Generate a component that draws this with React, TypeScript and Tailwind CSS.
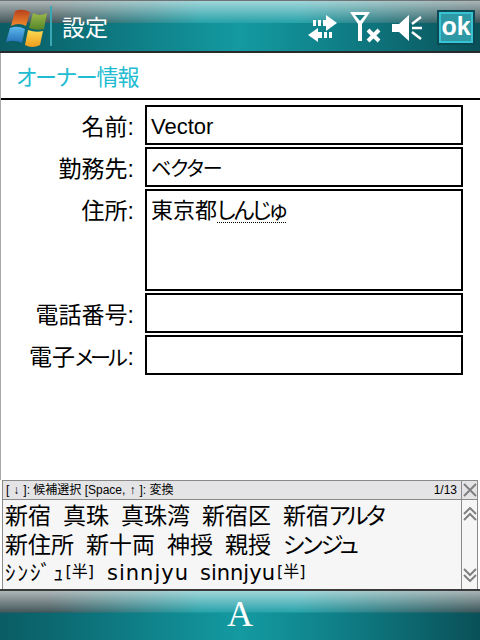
const jp = { fontFamily: '"Liberation Sans", "Noto Sans CJK JP", sans-serif', fontFeatureSettings: '"palt"' };

const barBg =
  "[background:linear-gradient(to_bottom,rgba(255,255,255,0.6),rgba(255,255,255,0.08))_0_0/100%_44%_no-repeat,linear-gradient(to_right,#34484c_0%,#34484c_10%,#149aa2_42%,#149aa2_62%,#2a4448_100%)_0_0/100%_44%_no-repeat,linear-gradient(to_right,#0b5c64_0%,#0b6a72_12%,#149aa2_50%,#0f7d85_72%,#0a5058_100%)]";

function WinLogo() {
  return (
    <svg width="42" height="38" viewBox="0 0 42 38">
      <defs>
        <linearGradient id="logoRed" x1="0" y1="0" x2="0" y2="1">
          <stop offset="0" stopColor="#b8401c" />
          <stop offset="1" stopColor="#f08a2c" />
        </linearGradient>
        <linearGradient id="logoGreen" x1="0" y1="0" x2="0" y2="1">
          <stop offset="0" stopColor="#9ab84a" />
          <stop offset="1" stopColor="#55852a" />
        </linearGradient>
        <linearGradient id="logoBlue" x1="0" y1="0" x2="0" y2="1">
          <stop offset="0" stopColor="#5cb8ec" />
          <stop offset="1" stopColor="#2470b8" />
        </linearGradient>
        <linearGradient id="logoYellow" x1="0" y1="0" x2="0" y2="1">
          <stop offset="0" stopColor="#fbdc54" />
          <stop offset="1" stopColor="#f09c1c" />
        </linearGradient>
      </defs>
      <path d="M10 2 Q17 -1 25 3 L21 17 Q14 13 6 17 Z" fill="url(#logoRed)" />
      <path d="M28 4 Q35 8 42 4 L39 20 Q31 22 24 19 Z" fill="url(#logoGreen)" />
      <path d="M5 19 Q13 16 20 20 L17 34 Q9 30 1 33 Z" fill="url(#logoBlue)" />
      <path d="M23 21 Q31 24 38 22 L35 36 Q27 40 20 36 Z" fill="url(#logoYellow)" />
    </svg>
  );
}

function SyncIcon() {
  return (
    <svg width="31" height="28" viewBox="0 0 31 28" fill="#fff">
      <path d="M6 6h3v6H6zM11 6h3v6h-3zM16 6h3V1l11 8-11 8v-5h-3z" />
      <path d="M11 28 1 21l10-7v4h4v6h-4zM17 18h3v6h-3zM22 18h3v6h-3z" />
    </svg>
  );
}

function SignalOffIcon() {
  return (
    <svg width="32" height="32" viewBox="0 0 32 32" fill="none" stroke="#fff">
      <path d="M0 0h20L12 12v17H8V12z" fill="#fff" stroke="none" />
      <path d="M5 3h10l-5 6z" fill="#1a8189" stroke="none" />
      <path d="M18 18l11 11M29 18 18 29" strokeWidth="4" />
    </svg>
  );
}

function SoundIcon() {
  return (
    <svg width="31" height="26" viewBox="0 0 31 26" fill="none" stroke="#fff">
      <path d="M0 9h7l10-9v26L7 17H0z" fill="#fff" stroke="none" />
      <path d="M20 9l9-7M20 13h10M20 17l9 7" strokeWidth="2.5" />
    </svg>
  );
}

function Row({ label, value, tall }: { label: React.ReactNode; value?: React.ReactNode; tall?: boolean }) {
  return (
    <div className="flex gap-[9px]">
      <div className="w-[135px] h-10 pr-[2px] pt-[4px] text-right text-[23px] leading-[36px] text-black">{label}:</div>
      <div className={`w-[318px] border-2 border-black px-[4px] pt-[2px] text-[22px] leading-[36px] text-black ${tall ? "h-[102px]" : "h-10"}`}>
        {value}
      </div>
    </div>
  );
}

export default function App() {
  return (
    <div className="w-[480px] h-[640px] flex flex-col bg-white overflow-hidden" style={jp}>
      <div className={`h-[53px] shrink-0 flex items-center border-t border-t-[#6f7577] border-b-2 border-b-[#262a2a] ${barBg}`}>
        <div className="w-[50px] pl-[5px] pt-[4px] flex">
          <WinLogo />
        </div>
        <div className="w-[2px] h-10 bg-[#3aa8b4]" />
        <div className="ml-[10px] pt-[4px] text-[23px] text-white flex-1">設定</div>
        <div className="flex items-center pt-[3px]">
          <SyncIcon />
          <div className="ml-[12px]"><SignalOffIcon /></div>
          <div className="ml-[10px]"><SoundIcon /></div>
          <div className="ml-[14px] mr-[5px] w-[38px] h-[35px] border-[2px] border-[#0b4a52] flex">
            <div className="flex-1 border-2 border-[#38c4d4] bg-[#2e98a4] text-white font-bold text-[25px] leading-[25px] text-center">ok</div>
          </div>
        </div>
      </div>

      <div className="flex-1 flex flex-col border-l border-l-[#a8a8a8]">
        <div className="h-[47px] shrink-0 border-b-2 border-black pl-[15px] text-[22px] leading-[50px] tracking-[-1px] text-[#22bcd2]">オーナー情報</div>
        <div className="flex flex-col gap-[2px] pt-[5px]">
          <Row label="名前" value="Vector" />
          <Row label="勤務先" value={<span className="text-[20px] tracking-[-1px]">ベクター</span>} />
          <Row
            label="住所"
            tall
            value={
              <span>
                東京都<span className="inline-block h-[24px] leading-[24px] tracking-[-2px] border-b border-dotted border-black">しんじゅ</span>
              </span>
            }
          />
          <Row label="電話番号" />
          <Row label={<>電子<span className="text-[21px] tracking-[-3px] mr-[3px]">メール</span></>} />
        </div>
      </div>

      <div className="h-[109px] shrink-0 mx-[2px] flex flex-col border-t border-t-[#8a8a8a] border-x border-x-[#8a8a8a] bg-[#f6f6f6]">
        <div className="h-[19px] shrink-0 flex border-b border-[#8a8a8a] bg-[#e4e4e6] text-[12px] leading-[18px] text-black">
          <div className="flex-1 pl-[3px] flex justify-between pr-[4px]">
            <span>[<span className="px-[4px]">↓</span>]: 候補選択 [Space,<span className="px-[4px]">↑</span>]: 変換</span>
            <span>1/13</span>
          </div>
          <div className="w-[16px] border-l border-[#8a8a8a] flex items-center justify-center">
            <svg width="14" height="14" viewBox="0 0 14 14" fill="none" stroke="#808080" strokeWidth="2">
              <path d="M1 1l12 12M13 1 1 13" />
            </svg>
          </div>
        </div>
        <div className="flex-1 flex">
          <div className="flex-1 pl-[2px] text-black">
            <div className="text-[23px] leading-[29px] mt-[2px] flex gap-[12px]">
              <span>新宿</span><span>真珠</span><span>真珠湾</span><span>新宿区</span><span>新宿<span className="tracking-[-3px]">アルタ</span></span>
            </div>
            <div className="text-[23px] leading-[29px] flex gap-[12px]">
              <span>新住所</span><span>新十両</span><span>神授</span><span>親授</span><span className="tracking-[-2px]">シンジュ</span>
            </div>
            <div className="text-[21px] leading-[27px] flex whitespace-nowrap" style={{ fontFamily: '"DejaVu Sans", "Noto Sans CJK JP", sans-serif' }}>
              <span className="tracking-[2px]">ｼﾝｼﾞｭ</span>
              <span className="-mt-[2px] text-[16px]">[半]</span>
              <span className="ml-[13px] tracking-[1px]">sinnjyu</span>
              <span className="ml-[11px]">sinnjyu</span>
              <span className="-mt-[2px] ml-[2px] text-[16px]">[半]</span>
            </div>
          </div>
          <div className="w-[16px] border-l border-[#8a8a8a] flex flex-col justify-between py-[7px] items-center">
            <svg width="14" height="14" viewBox="0 0 14 14" fill="none" stroke="#808080" strokeWidth="2">
              <path d="M1 7l6-6 6 6M1 13l6-6 6 6" />
            </svg>
            <svg width="14" height="14" viewBox="0 0 14 14" fill="none" stroke="#808080" strokeWidth="2">
              <path d="M1 1l6 6 6-6M1 7l6 6 6-6" />
            </svg>
          </div>
        </div>
      </div>

      <div className={`h-[51px] shrink-0 border-t-2 border-t-[#3a3a3a] flex items-center justify-center pb-[3px] ${barBg}`}>
        <span className="text-white text-[36px] leading-none" style={{ fontFamily: '"Liberation Serif", serif' }}>A</span>
      </div>
    </div>
  );
}
